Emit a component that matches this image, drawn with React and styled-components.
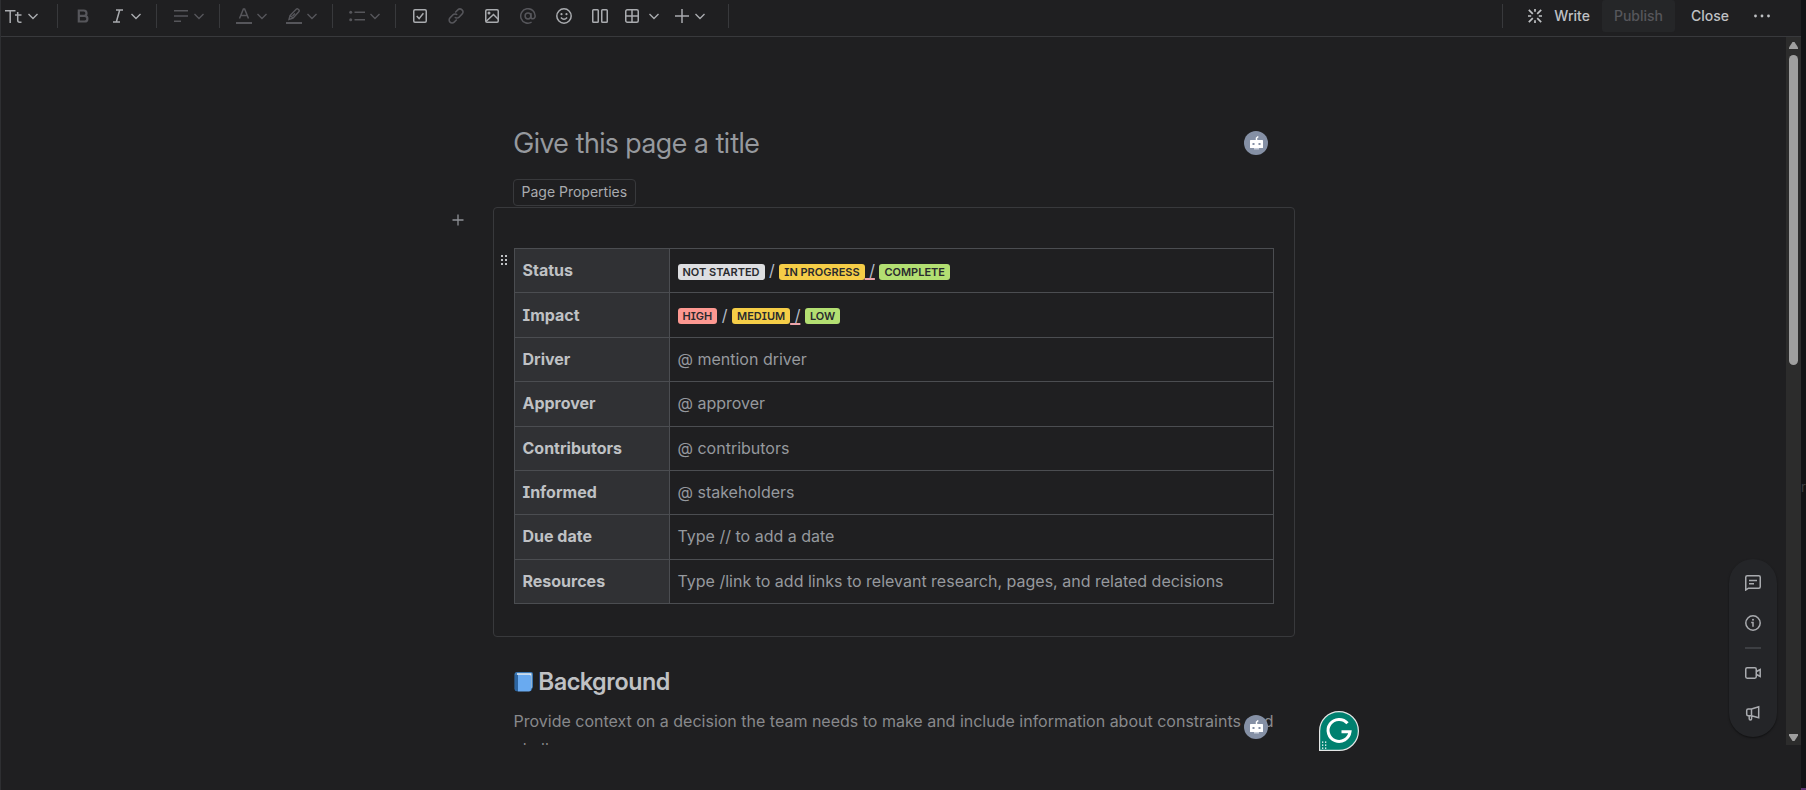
import React from "react";
import styled, { createGlobalStyle } from "styled-components";

const color = {
  surface: "#1f1f21",
  outer: "#121315",
  line: "#38393c",
  tableLine: "#4b4d51",
  cellHead: "#303134",
  text: "#bfc1c4",
  icon: "#a9abaf",
  placeholder: "#96999e",
  disabled: "#56565b",
};

const GlobalStyle = createGlobalStyle`
  *, *::before, *::after { box-sizing: border-box; }
  body {
    margin: 0;
    background: ${color.surface};
    color: ${color.text};
    font-family: Inter, "Liberation Sans", sans-serif;
    font-feature-settings: "cv08";
    font-size: 16px;
  }
  button, input { font: inherit; font-feature-settings: inherit; color: inherit; }
`;

const Page = styled.div`
  display: grid;
  grid-template-columns: minmax(0, 1fr) 5px;
  height: 100vh;
  overflow: hidden;
`;

const Main = styled.main`
  position: relative;
  display: flex;
  flex-direction: column;
  border-left: 1px solid #2e2f32;
  padding-bottom: 45px;
  min-height: 0;
`;

const Toolbar = styled.header`
  display: flex;
  flex: none;
  align-items: flex-start;
  height: 37px;
  padding: 0 18px 0 4px;
  border-bottom: 1px solid ${color.line};
`;

const Group = styled.div`
  display: flex;
  gap: ${(p) => p.$gap || 18}px;
  padding-right: ${(p) => p.$end || 0}px;
`;

const Divider = styled.span`
  width: 1px;
  height: 24px;
  margin: 4px ${(p) => p.$after || 16}px 0 14px;
  background: ${color.line};
`;

const ToolButton = styled.button`
  display: flex;
  align-items: center;
  justify-content: center;
  gap: ${(p) => p.$gap || 4}px;
  min-width: ${(p) => p.$width || 16}px;
  height: 32px;
  padding: 0;
  border: 0;
  background: none;
  color: ${(p) => (p.disabled ? color.disabled : color.icon)};
`;

const Actions = styled.div`
  display: flex;
  align-items: flex-start;
  margin-left: auto;
`;

const ActionButton = styled.button`
  display: flex;
  align-items: center;
  gap: 11px;
  height: 32px;
  padding: 0 12px;
  border: 0;
  border-radius: 3px;
  background: ${(p) => (p.disabled ? "#252628" : "none")};
  color: ${(p) => (p.disabled ? color.disabled : color.text)};
  font-size: 14px;
  font-weight: 500;
  line-height: 20px;
`;

const Body = styled.div`
  display: flex;
  flex: 1;
  min-height: 0;
`;

const Scroll = styled.div`
  position: relative;
  flex: 1;
  min-width: 0;
  overflow: hidden;
`;

const Article = styled.article`
  width: 802px;
  max-width: 100%;
  margin: 0 auto;
  padding-top: 90px;
`;

const TitleRow = styled.div`
  display: flex;
  align-items: center;
  gap: 16px;
  padding: 0 27px 0 21px;
`;

const TitleInput = styled.input`
  flex: 1;
  min-width: 0;
  height: 32px;
  padding: 0;
  border: 0;
  outline: 0;
  background: none;
  font-family: "Inter Display", Inter, "Liberation Sans", sans-serif;
  font-size: 28px;
  line-height: 32px;
  &::placeholder { color: ${color.placeholder}; opacity: 1; }
`;

const PropertiesTab = styled.button`
  display: block;
  height: 27px;
  margin: 20px 0 1px 20px;
  padding: 0 8px 2px;
  border: 1px solid ${color.line};
  border-radius: 4px;
  background: none;
  color: #a9abaf;
  font-size: 14px;
  line-height: 20px;
`;

const Panel = styled.section`
  position: relative;
  padding: 40px 20px 32px;
  border: 1px solid ${color.line};
  border-radius: 4px;
`;

const AddBlock = styled.button`
  position: absolute;
  left: -44px;
  top: 4px;
  display: flex;
  padding: 0;
  border: 0;
  background: none;
  color: #8f9196;
`;

const DragHandle = styled.button`
  position: absolute;
  left: 6px;
  top: 47px;
  display: flex;
  padding: 0;
  border: 0;
  background: none;
  color: ${color.text};
`;

const Table = styled.table`
  width: 100%;
  height: 356px;
  border-collapse: collapse;
  table-layout: fixed;
  line-height: 24px;
  th, td {
    padding: 0 8px 1px;
    border: 1px solid ${color.tableLine};
    text-align: left;
  }
  th {
    width: 155px;
    background: ${color.cellHead};
    font-weight: 700;
  }
  td { color: ${color.placeholder}; }
`;

const lozengeColors = {
  neutral: "#dddee1",
  yellow: "#f5cd47",
  green: "#b3df72",
  red: "#fd9891",
};

const Lozenge = styled.span`
  display: inline-block;
  height: 16px;
  padding: 0 5px;
  border-radius: 3px;
  background: ${(p) => lozengeColors[p.$tone]};
  color: #292a2e;
  font-size: 11px;
  font-weight: 600;
  line-height: 16px;
  vertical-align: middle;
`;

const Slash = styled.span`
  color: #b4bcc8;
  white-space: pre;
`;

const Underlined = styled(Slash)`
  text-decoration: underline 2px #efa5ab;
  text-decoration-skip-ink: none;
  text-underline-offset: 2px;
`;

const Section = styled.section`
  position: relative;
  padding: 0 20px 0 21px;
`;

const SectionTitle = styled.h2`
  display: flex;
  align-items: center;
  gap: 5px;
  margin: 31px 0 0;
  font-family: "Inter Display", Inter, "Liberation Sans", sans-serif;
  font-size: 24px;
  font-weight: 600;
  line-height: 28px;
`;

const Paragraph = styled.p`
  margin: 11px 0 0;
  color: #88898c;
  line-height: 28px;
`;

const CollaboratorSpot = styled.span`
  position: absolute;
  right: 27px;
  top: 47px;
  display: flex;
`;

const Scrollbar = styled.div`
  display: flex;
  flex-direction: column;
  align-items: center;
  justify-content: space-between;
  width: 15px;
  padding: 5px 0 4px;
  background: #2c2c2c;
`;

const ScrollTrack = styled.div`
  flex: 1;
  width: 9px;
  margin: 6px 0;
`;

const ScrollThumb = styled.div`
  height: 46%;
  min-height: 24px;
  border-radius: 5px;
  background: #9f9f9f;
`;

const FloatingRail = styled.nav`
  position: absolute;
  right: 9px;
  bottom: 8px;
  display: flex;
  flex-direction: column;
  align-items: center;
  width: 48px;
  padding: 4px;
  border-radius: 24px;
  background: #242528;
  box-shadow: 0 1px 2px rgba(0, 0, 0, 0.5);
`;

const RailButton = styled.button`
  display: flex;
  align-items: center;
  justify-content: center;
  width: 40px;
  height: 40px;
  padding: 0;
  border: 0;
  background: none;
  color: ${color.icon};
`;

const RailRule = styled.span`
  width: 16px;
  height: 2px;
  margin: 4px 0;
  background: #3d3f43;
`;

const AssistantButton = styled.button`
  position: absolute;
  left: calc(50% + 418px);
  bottom: 39px;
  display: flex;
  padding: 0;
  border: 0;
  background: none;
`;

const Edge = styled.aside`
  display: flex;
  flex-direction: column;
  justify-content: center;
  overflow: hidden;
  padding-top: 186px;
  border-bottom: 2px solid #5b3470;
  background: ${color.outer};
  color: #3c3d40;
  font-size: 13px;
  line-height: 16px;
`;

const Icon = ({ size = 16, children }) => (
  <svg
    width={size}
    height={size}
    viewBox={`0 0 ${size} ${size}`}
    fill="none"
    stroke="currentColor"
    strokeWidth="1.5"
    aria-hidden="true"
  >
    {children}
  </svg>
);

const Chevron = () => (
  <Icon size={12}>
    <path d="M1.5 4 6 8.5 10.5 4" strokeWidth="1.4" />
  </Icon>
);

const TextStyleIcon = () => (
  <Icon size={18}>
    <path d="M0 3.8h10.5M5.2 3.8V16M10 8h6.5M12.7 5v8.2q0 2 2 2h1.8" />
  </Icon>
);
const BoldIcon = () => (
  <Icon>
    <path d="M3.8 2.5h5a2.7 2.7 0 0 1 0 5.4h-5zM3.8 7.9h5.8a2.8 2.8 0 0 1 0 5.6H3.8z" strokeWidth="2.2" />
  </Icon>
);
const ItalicIcon = () => (
  <Icon>
    <path d="M6 2h7M3 14h7M9.7 2 6.3 14" />
  </Icon>
);
const AlignIcon = () => (
  <Icon>
    <path d="M1 2.8h14M1 8h14M1 13.2h7" />
  </Icon>
);
const TextColorIcon = () => (
  <Icon>
    <path d="M3.5 10.5 7.4 1h1.2l3.9 9.5M5 7.5h6" />
    <rect x="0" y="14" width="16" height="3" fill="currentColor" stroke="none" />
  </Icon>
);
const HighlightIcon = () => (
  <Icon>
    <path d="M3 11.5 4 7.5 10.2 1.2q1-.8 2 0l.6.6q.9 1 0 2L7 10.2zM4.3 7.4l2.8 2.8M6.5 8 9 5.5" strokeWidth="1.4" />
    <rect x="0" y="14" width="16" height="3" fill="currentColor" stroke="none" />
  </Icon>
);
const ListIcon = () => (
  <Icon>
    <path d="M5.5 4.2H16M5.5 11.8H16" />
    <circle cx="1.7" cy="4.2" r="1.5" fill="currentColor" stroke="none" />
    <circle cx="1.7" cy="11.8" r="1.5" fill="currentColor" stroke="none" />
  </Icon>
);
const TaskIcon = () => (
  <Icon>
    <rect x="1.75" y="1.75" width="12.5" height="12.5" rx="1.2" />
    <path d="m4.7 8 2.4 2.6 4.3-5.4" />
  </Icon>
);
const LinkIcon = () => (
  <Icon>
    <path d="m7.2 4.5 2.6-2.6a2.9 2.9 0 0 1 4.2 4.2L11 9.2a2.9 2.9 0 0 1-4.2 0M8.8 11.5l-2.6 2.6A2.9 2.9 0 0 1 2 9.9l3-3.1a2.9 2.9 0 0 1 4.2 0" />
  </Icon>
);
const ImageIcon = () => (
  <Icon>
    <rect x="1.75" y="1.75" width="12.5" height="12.5" rx="1.2" />
    <path d="m2 13.5 7.5-7 4.7 4.7" />
    <circle cx="5" cy="5" r="1.5" fill="currentColor" stroke="none" />
  </Icon>
);
const MentionIcon = () => (
  <Icon>
    <circle cx="8" cy="8" r="2.9" />
    <path d="M10.9 5v3.7q0 2.1 2 2.1t2.3-2.8a7.25 7.25 0 1 0-3.6 6.2" />
  </Icon>
);
const EmojiIcon = () => (
  <Icon>
    <circle cx="8" cy="8" r="7.2" />
    <path d="M4.9 9.5q3.1 3.6 6.2 0" />
    <circle cx="5.5" cy="6.2" r="1.1" fill="currentColor" stroke="none" />
    <circle cx="10.5" cy="6.2" r="1.1" fill="currentColor" stroke="none" />
  </Icon>
);
const ColumnsIcon = () => (
  <Icon>
    <rect x="0.75" y="1.75" width="5.5" height="12.5" rx="0.8" />
    <rect x="9.75" y="1.75" width="5.5" height="12.5" rx="0.8" />
  </Icon>
);
const TableIcon = () => (
  <Icon>
    <rect x="1.75" y="1.75" width="12.5" height="12.5" rx="1.5" />
    <path d="M8 2v12M2 8h12" />
  </Icon>
);
const PlusIcon = () => (
  <Icon>
    <path d="M8 1v14M1 8h14" />
  </Icon>
);
const SmallPlusIcon = () => (
  <Icon>
    <path d="M8 2.5v11M2.5 8h11" strokeWidth="1.3" />
  </Icon>
);
const SparkIcon = () => (
  <Icon>
    <path
      d="M8 1v2.8M8 12.2V15M1 8h3.2M11.8 8H15M1.8 1.8l4 4M10.2 10.2l4 4M14.2 1.8l-4 4M5.8 10.2l-4 4"
      strokeWidth="1.7"
    />
  </Icon>
);
const MoreIcon = () => (
  <Icon size={18}>
    <g fill="currentColor" stroke="none">
      <circle cx="2.5" cy="9" r="1.4" />
      <circle cx="9" cy="9" r="1.4" />
      <circle cx="15.5" cy="9" r="1.4" />
    </g>
  </Icon>
);
const HandleIcon = () => (
  <Icon size={10}>
    <g fill="currentColor" stroke="none">
      {[0, 4, 8].map((y) => (
        <React.Fragment key={y}>
          <rect x="1" y={y} width="2" height="2" />
          <rect x="5" y={y} width="2" height="2" />
        </React.Fragment>
      ))}
    </g>
  </Icon>
);
const CommentIcon = () => (
  <Icon>
    <path d="M.75 15V2.3q0-1.5 1.5-1.5h11.5q1.5 0 1.5 1.5v9.4q0 1.5-1.5 1.5H3.5zM4 5.5h8M4 8.7h5" />
  </Icon>
);
const InfoIcon = () => (
  <Icon>
    <circle cx="8" cy="8" r="7.2" />
    <path d="M6.2 7.5H8v4.3" />
    <circle cx="8" cy="4.7" r="1" fill="currentColor" stroke="none" />
  </Icon>
);
const VideoIcon = () => (
  <Icon>
    <rect x="0.75" y="2.75" width="10.5" height="10.5" rx="1.4" />
    <path d="m11.5 6.5 3.7-2v7l-3.7-2" />
  </Icon>
);
const MegaphoneIcon = () => (
  <Icon>
    <path d="M6.5 4 13.7 1.7v11L6.5 10.8H3.2q-1.5 0-1.5-1.5V5.5Q1.7 4 3.2 4zM6.5 4v6.8M4.2 11v2.7q0 1.2 1.2 1.2t1.2-1.2V11" />
  </Icon>
);

const RobotAvatar = () => (
  <svg width="24" height="24" viewBox="0 0 24 24" role="img" aria-label="Collaborator">
    <circle cx="12" cy="12" r="12" fill="#8590a5" />
    <path d="M12.5 9V7l1.8-1.5" stroke="#fff" strokeWidth="1.5" fill="none" />
    <rect x="6" y="9" width="13" height="8" rx="0.5" fill="#fff" />
    <rect x="10" y="17" width="5" height="1.5" fill="#c9cfdb" />
    <rect x="8.5" y="12" width="2" height="2" fill="#8590a5" />
    <rect x="14.5" y="12" width="2" height="2" fill="#8590a5" />
  </svg>
);

const BookIcon = () => (
  <svg width="20" height="22" viewBox="0 0 20 22" aria-hidden="true">
    <path d="M3 1h14q2 0 2 2v13l-2 4H3q-2.5 0-2.5-2.5V3.5Q.5 1 3 1z" fill="#3b78b5" />
    <path d="M3 2.2h14.5v15L16 17V4H3z" fill="#e8edf2" />
    <path d="M4 3.8h11.5q1.5 0 1.5 1.5V18q0 2.5-2 2.5H4z" fill="#69aaf0" />
    <path d="M1 4q1 0 3-.2V20.5q-3 0-3-2.5z" fill="#2c64a0" />
  </svg>
);

const AssistantLogo = () => (
  <svg width="40" height="40" viewBox="0 0 40 40" aria-hidden="true">
    <path d="M.6 39.4V20A19.4 19.4 0 1 1 20 39.4z" fill="#00806f" stroke="#e4e6e6" strokeWidth="1.2" />
    <path d="M28.5 12.3A11 11 0 1 0 31 20.8H22.5" fill="none" stroke="#fff" strokeWidth="3" />
    <g fill="#fff">
      {[31, 34, 37].map((y) =>
        [3, 6].map((x) => <rect key={`${x}-${y}`} x={x} y={y - 0.5} width="1.3" height="1.3" />)
      )}
    </g>
  </svg>
);

const ArrowIcon = ({ down }) => (
  <svg width="9" height="7" viewBox="0 0 9 7" aria-hidden="true">
    <path d={down ? "M0 0h9v1.5L5.5 7h-2L0 1.5z" : "M0 7h9V5.5L5.5 0h-2L0 5.5z"} fill="#9f9f9f" />
  </svg>
);

const statusOptions = [
  ["NOT STARTED", "neutral"],
  ["IN PROGRESS", "yellow"],
  ["COMPLETE", "green"],
];
const impactOptions = [
  ["HIGH", "red"],
  ["MEDIUM", "yellow"],
  ["LOW", "green"],
];

const Options = ({ items: [first, second, third] }) => (
  <>
    <Lozenge $tone={first[1]}>{first[0]}</Lozenge>
    <Slash>{" / "}</Slash>
    <Lozenge $tone={second[1]}>{second[0]}</Lozenge>
    <Underlined>{" /"}</Underlined>{" "}
    <Lozenge $tone={third[1]}>{third[0]}</Lozenge>
  </>
);

const properties = [
  ["Status", <Options items={statusOptions} />],
  ["Impact", <Options items={impactOptions} />],
  ["Driver", "@ mention driver"],
  ["Approver", "@ approver"],
  ["Contributors", "@ contributors"],
  ["Informed", "@ stakeholders"],
  ["Due date", "Type // to add a date"],
  ["Resources", "Type /link to add links to relevant research, pages, and related decisions"],
];

const EditorToolbar = () => (
  <Toolbar>
    <Group $end={4}>
      <ToolButton aria-label="Text styles"><TextStyleIcon /><Chevron /></ToolButton>
    </Group>
    <Divider />
    <Group>
      <ToolButton $width={18} disabled aria-label="Bold"><BoldIcon /></ToolButton>
      <ToolButton aria-label="Italic"><ItalicIcon /><Chevron /></ToolButton>
    </Group>
    <Divider />
    <Group>
      <ToolButton disabled aria-label="Alignment"><AlignIcon /><Chevron /></ToolButton>
    </Group>
    <Divider />
    <Group>
      <ToolButton disabled aria-label="Text color"><TextColorIcon /><Chevron /></ToolButton>
      <ToolButton disabled aria-label="Highlight"><HighlightIcon /><Chevron /></ToolButton>
    </Group>
    <Divider />
    <Group>
      <ToolButton disabled aria-label="Lists"><ListIcon /><Chevron /></ToolButton>
    </Group>
    <Divider />
    <Group $gap={20} $end={16}>
      <ToolButton aria-label="Action item"><TaskIcon /></ToolButton>
      <ToolButton disabled aria-label="Link"><LinkIcon /></ToolButton>
      <ToolButton aria-label="Image"><ImageIcon /></ToolButton>
      <ToolButton disabled aria-label="Mention"><MentionIcon /></ToolButton>
      <ToolButton aria-label="Emoji"><EmojiIcon /></ToolButton>
      <ToolButton aria-label="Layouts"><ColumnsIcon /></ToolButton>
    </Group>
    <Group $gap={14} $end={8}>
      <ToolButton $gap={8} aria-label="Table"><TableIcon /><Chevron /></ToolButton>
      <ToolButton aria-label="Insert"><PlusIcon /><Chevron /></ToolButton>
    </Group>
    <Divider />
    <Actions>
      <Divider $after={12} />
      <ActionButton><SparkIcon />Write</ActionButton>
      <Group $end={4}>
        <ActionButton disabled>Publish</ActionButton>
      </Group>
      <ActionButton>Close</ActionButton>
      <ActionButton aria-label="More actions"><MoreIcon /></ActionButton>
    </Actions>
  </Toolbar>
);

export default function App() {
  return (
    <>
      <GlobalStyle />
      <Page>
        <Main>
          <EditorToolbar />
          <Body>
            <Scroll>
              <Article>
                <TitleRow>
                  <TitleInput aria-label="Page title" placeholder="Give this page a title" />
                  <RobotAvatar />
                </TitleRow>
                <PropertiesTab>Page Properties</PropertiesTab>
                <Panel>
                  <AddBlock aria-label="Add block"><SmallPlusIcon /></AddBlock>
                  <DragHandle aria-label="Drag row"><HandleIcon /></DragHandle>
                  <Table>
                    <tbody>
                      {properties.map(([name, value]) => (
                        <tr key={name}>
                          <th scope="row">{name}</th>
                          <td>{value}</td>
                        </tr>
                      ))}
                    </tbody>
                  </Table>
                </Panel>
                <Section>
                  <SectionTitle><BookIcon />Background</SectionTitle>
                  <Paragraph>
                    Provide context on a decision the team needs to make and include information about constraints and
                    challenges.
                  </Paragraph>
                  <CollaboratorSpot><RobotAvatar /></CollaboratorSpot>
                </Section>
              </Article>
              <FloatingRail aria-label="Page tools">
                <RailButton aria-label="Comments"><CommentIcon /></RailButton>
                <RailButton aria-label="Details"><InfoIcon /></RailButton>
                <RailRule />
                <RailButton aria-label="Record video"><VideoIcon /></RailButton>
                <RailButton aria-label="Feedback"><MegaphoneIcon /></RailButton>
              </FloatingRail>
            </Scroll>
            <Scrollbar aria-hidden="true">
              <ArrowIcon />
              <ScrollTrack><ScrollThumb /></ScrollTrack>
              <ArrowIcon down />
            </Scrollbar>
          </Body>
          <AssistantButton aria-label="Writing assistant"><AssistantLogo /></AssistantButton>
        </Main>
        <Edge>r</Edge>
      </Page>
    </>
  );
}
